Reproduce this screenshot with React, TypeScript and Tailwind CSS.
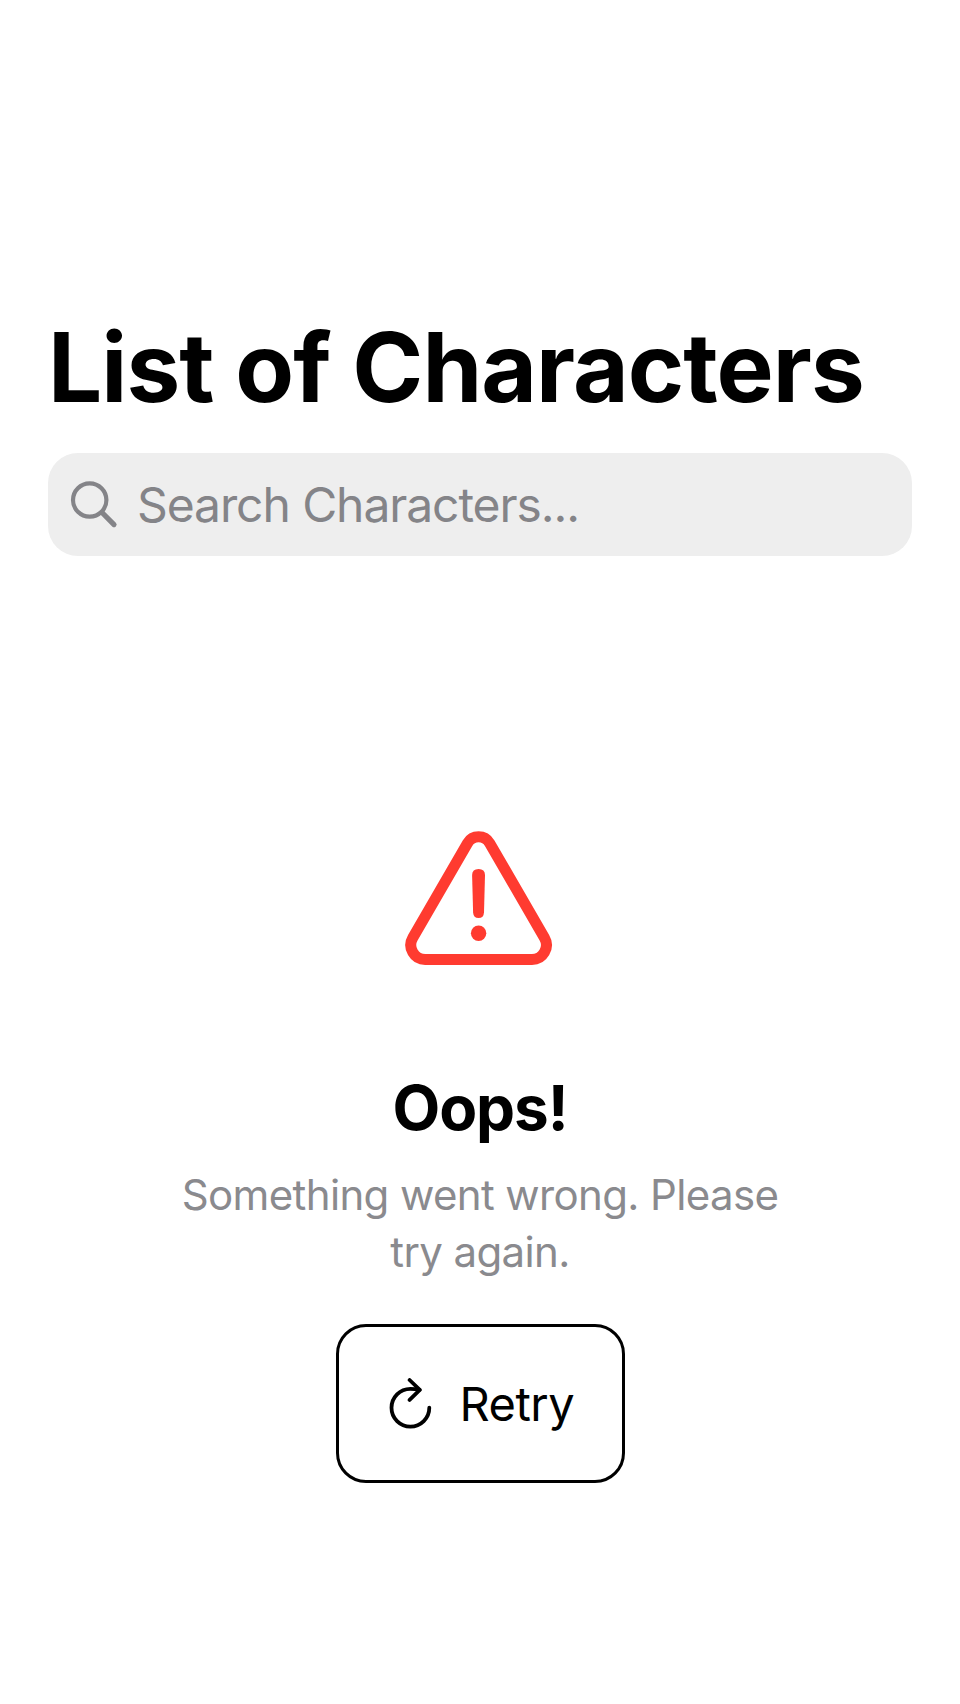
function SearchIcon() {
  return (
    <svg className="h-12 w-12 shrink-0" viewBox="0 0 48 48" fill="none" stroke="#848488" strokeLinecap="round">
      <circle cx="19.7" cy="19" r="16.7" strokeWidth="4.2" />
      <path d="M32 31.5 L44 43.6" strokeWidth="5.2" />
    </svg>
  );
}

function WarningIcon() {
  return (
    <svg className="mr-[2px] h-[134px] w-[148px]" viewBox="0 0 148 134" fill="none">
      <path
        d="M62.5 12.2 A12.8 12.8 0 0 1 84.7 12.2 L139.4 106.7 A14.5 14.5 0 0 1 126.8 128.5 L20.4 128.5 A14.5 14.5 0 0 1 7.8 106.7 Z"
        stroke="#ff3b30"
        strokeWidth="11"
      />
      <path d="M67.1 44 Q67.1 38 73.6 38 Q80 38 80 44 L79 81.5 Q78.7 87 73.6 87 Q68.5 87 68.1 81.5 Z" fill="#ff3b30" />
      <circle cx="73.6" cy="102.2" r="7.7" fill="#ff3b30" />
    </svg>
  );
}

function RetryIcon() {
  return (
    <svg
      className="h-[52px] w-[44px] shrink-0"
      viewBox="0 0 44 52"
      fill="none"
      stroke="#000"
      strokeWidth="3.8"
      strokeLinecap="round"
      strokeLinejoin="round"
    >
      <path d="M40.3 29.7 A18.9 18.9 0 1 1 21.4 10.8 Q26 10.8 30.5 11.9" />
      <path d="M20.6 2 L30.8 11.9 L20.6 21.9" />
    </svg>
  );
}

export default function App() {
  return (
    <main className="flex h-[1704px] w-[960px] flex-col bg-white px-12 pt-[309px] font-['Inter',sans-serif] text-black">
      <h1 className="h-[116px] text-[96px] leading-[116px] font-bold tracking-[-0.93px] whitespace-nowrap">
        List of Characters
      </h1>

      <div className="mt-7 flex h-[103px] items-center gap-[19px] rounded-[30px] bg-[#eeeeee] pl-[22px]">
        <SearchIcon />
        <span className="text-[48px] leading-[58px] tracking-[-1.09px] whitespace-nowrap text-[#848488]">
          Search Characters...
        </span>
      </div>

      <section className="mt-[275px] flex flex-col items-center">
        <WarningIcon />
        <h2 className="mt-[105px] text-[62px] leading-[76px] font-bold tracking-[-1.1px]">Oops!</h2>
        <p className="mt-5 text-center text-[42px] leading-[57px] tracking-[-0.63px] whitespace-nowrap text-[#8a8a8e]">
          Something went wrong. Please
          <br />
          try again.
        </p>
        <button className="mt-11 flex h-[159px] w-[289px] items-center gap-[27px] rounded-[30px] border-3 border-black pl-[50px]">
          <RetryIcon />
          <span className="text-[47px] leading-[58px] tracking-[-0.5px]">Retry</span>
        </button>
      </section>
    </main>
  );
}
